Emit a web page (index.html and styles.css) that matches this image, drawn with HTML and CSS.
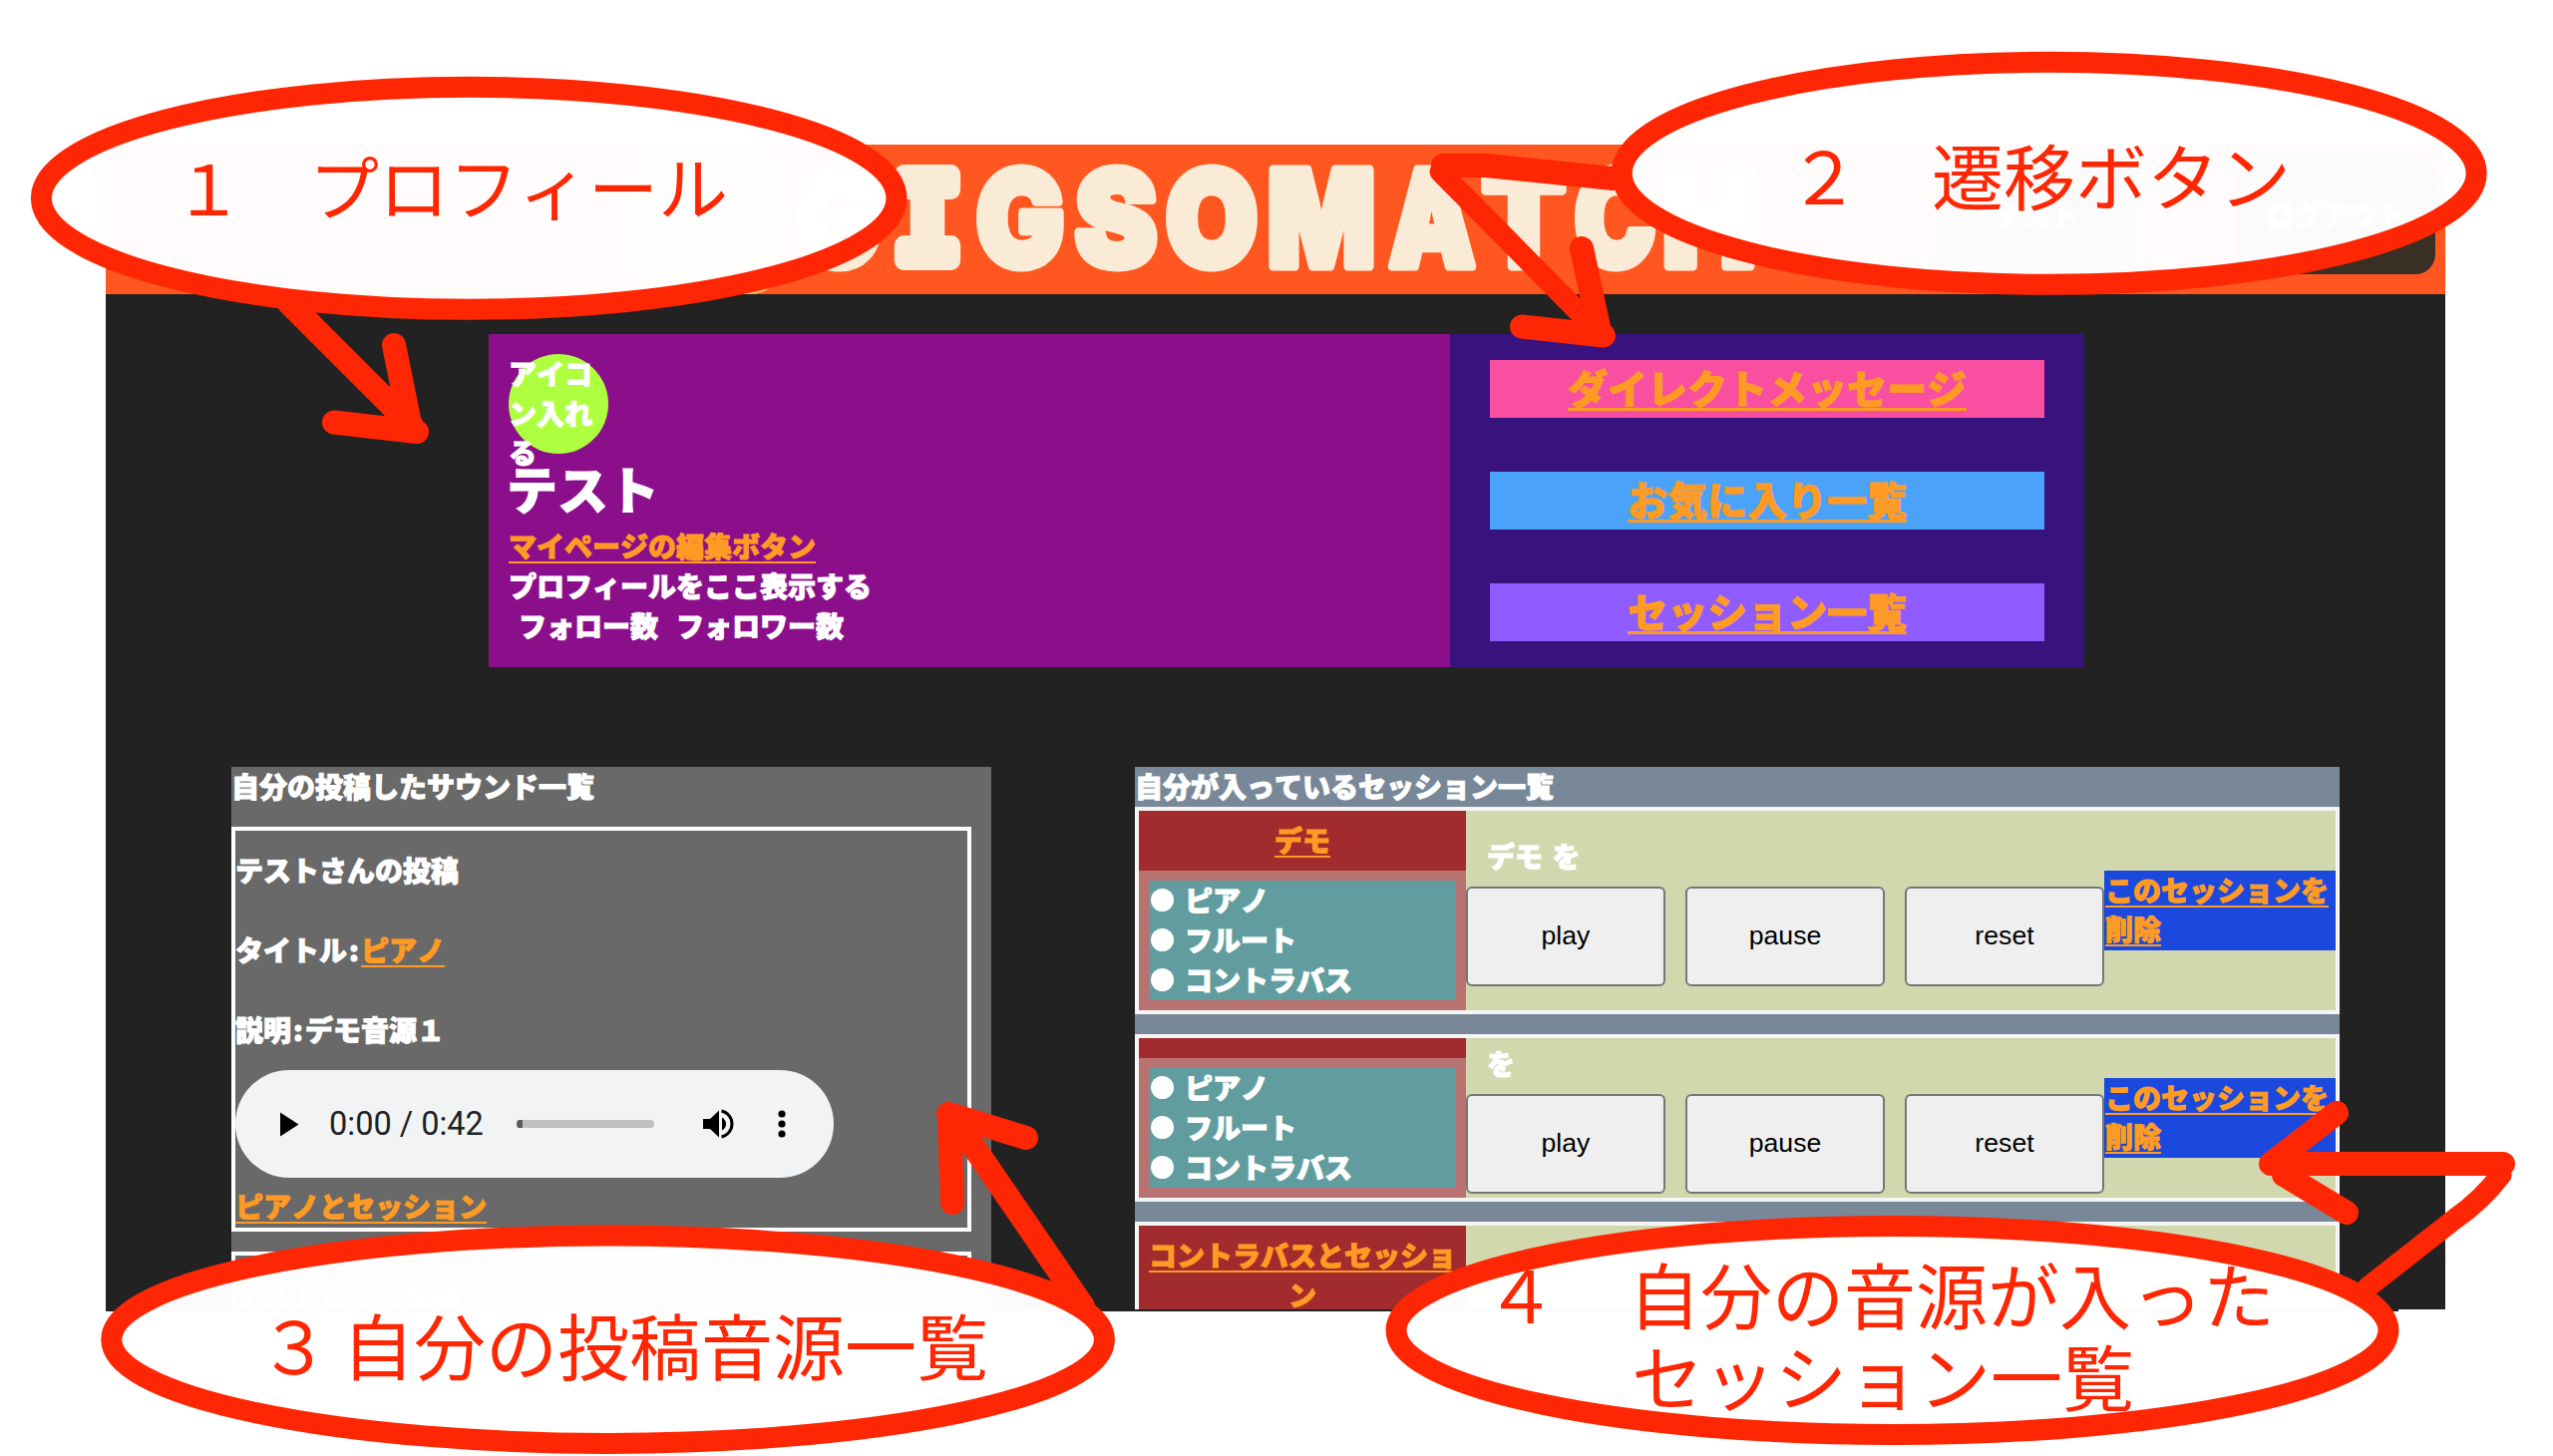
FILE: index.html
```html
<!DOCTYPE html>
<html lang="ja">
<head>
<meta charset="utf-8">
<title>GIGSOMATCH</title>
<link rel="stylesheet" href="styles.css">
</head>
<body>
<div class="site">
  <header class="header">
    <div class="logo">GIG</div>
    <svg class="brand" width="980" height="150" viewBox="0 0 980 150">
      <text y="122" class="brand-text"><tspan x="4" textLength="87" lengthAdjust="spacingAndGlyphs">G</tspan><tspan class="slab" x="104" y="116" textLength="66" lengthAdjust="spacingAndGlyphs">I</tspan><tspan x="186" y="122" textLength="88" lengthAdjust="spacingAndGlyphs">G</tspan><tspan x="285" textLength="82" lengthAdjust="spacingAndGlyphs">S</tspan><tspan x="376" textLength="92" lengthAdjust="spacingAndGlyphs">O</tspan><tspan x="478" textLength="108" lengthAdjust="spacingAndGlyphs">M</tspan><tspan x="600" textLength="86" lengthAdjust="spacingAndGlyphs">A</tspan><tspan x="693" textLength="84" lengthAdjust="spacingAndGlyphs">T</tspan><tspan x="786" textLength="81" lengthAdjust="spacingAndGlyphs">C</tspan><tspan x="874" textLength="94" lengthAdjust="spacingAndGlyphs">H</tspan></text>
    </svg>
    <nav class="nav">
      <span class="nav-item">テスト</span>
      <span class="nav-item">ログアウト</span>
    </nav>
  </header>

  <section class="profile">
    <div class="profile-info">
      <div class="avatar">アイコン入れる</div>
      <h1 class="name">テスト</h1>
      <div><a class="link">マイページの編集ボタン</a></div>
      <div>プロフィールをここ表示する</div>
      <div class="follow"><span>フォロー数</span><span>フォロワー数</span></div>
    </div>
    <div class="profile-links">
      <a class="big-link pink">ダイレクトメッセージ</a>
      <a class="big-link blue">お気に入り一覧</a>
      <a class="big-link violet">セッション一覧</a>
    </div>
  </section>

  <main class="lists">
    <section class="sounds">
      <h2 class="heading">自分の投稿したサウンド一覧</h2>
      <article class="sound">
        <p class="line">テストさんの投稿</p>
        <p class="line">タイトル<span class="colon">:</span><a class="link">ピアノ</a></p>
        <p class="line">説明<span class="colon">:</span>デモ音源１</p>
        <div class="player">
          <svg width="600" height="108" viewBox="0 0 600 108">
            <path d="M45 42.500V66.500L63.500 54.500Z"/>
            <rect x="282" y="50" width="138" height="8" rx="3.500" fill="#bfc0c2"/>
            <path d="M284 50H288V58H284Q282 57 282 54Q282 51 284 50Z" fill="#5a5b5d"/>
            <path d="M469 49H476L485 40.500V67.500L476 59H469Z"/>
            <path d="M488 47.500Q492 50 492 54Q492 58 488 60.500Z"/>
            <path d="M487.500 41A13.300 13.300 0 0 1 487.500 67" fill="none" stroke="#000" stroke-width="3"/>
            <circle cx="548" cy="44" r="3.600"/><circle cx="548" cy="54" r="3.600"/><circle cx="548" cy="64" r="3.600"/>
          </svg>
          <span class="time">0:00 / 0:42</span>
        </div>
        <div class="session-link"><a class="link">ピアノとセッション</a></div>
      </article>
      <article class="sound">
        <p class="line">テストさんの投稿</p>
      </article>
    </section>

    <section class="sessions">
      <h2 class="heading">自分が入っているセッション一覧</h2>
      <article class="session">
        <div class="members">
          <div class="session-name"><a class="link">デモ</a></div>
          <ul class="parts"><li>ピアノ</li><li>フルート</li><li>コントラバス</li></ul>
        </div>
        <div class="controls">
          <p class="target">デモ を</p>
          <div class="buttons"><button>play</button><button>pause</button><button>reset</button></div>
        </div>
        <div class="delete"><a class="link">このセッションを削除</a></div>
      </article>
      <article class="session">
        <div class="members">
          <div class="session-name"></div>
          <ul class="parts"><li>ピアノ</li><li>フルート</li><li>コントラバス</li></ul>
        </div>
        <div class="controls">
          <p class="target">を</p>
          <div class="buttons"><button>play</button><button>pause</button><button>reset</button></div>
        </div>
        <div class="delete"><a class="link">このセッションを削除</a></div>
      </article>
      <article class="session">
        <div class="members">
          <div class="session-name"><a class="link">コントラバスとセッション</a></div>
        </div>
      </article>
    </section>
  </main>
</div>
<div class="site-edge"></div>

<svg class="notes" width="2560" height="1460" viewBox="0 0 2560 1460">
  <g class="bubbles">
    <ellipse cx="470.200" cy="198.800" rx="428.800" ry="111.500"/>
    <ellipse cx="2054.700" cy="173.800" rx="428.500" ry="111.500"/>
    <ellipse cx="609.600" cy="1343.200" rx="497.800" ry="104.200"/>
    <ellipse cx="1897.500" cy="1334" rx="497.500" ry="104.500"/>
  </g>
  <g class="arrows">
    <path d="M290 304L413 427M395 346L412 430M335 423.500L418 433"/>
    <path d="M1618 179L1490 166H1447"/>
    <path d="M1444 172L1600 330" class="thin"/>
    <path d="M1586 249L1603 328M1526 327.500L1608 336.500"/>
    <path d="M951 1117L1029 1141M952 1125L955 1206M960 1126L1086 1310"/>
    <path d="M2510 1167H2277L2343 1116M2290 1178L2353 1216"/>
    <path d="M2508 1178Q2488 1204 2462 1222L2374 1291" class="thin"/>
  </g>
  <g class="labels">
    <text x="174" y="216" font-size="70">１</text>
    <text x="310" y="216" font-size="70">プロフィール</text>
    <text x="1793" y="205" font-size="72">２　遷移ボタン</text>
    <text x="259" y="1378" font-size="72">３</text>
    <text x="343" y="1378" font-size="72">自分の投稿音源一覧</text>
    <text x="1489" y="1327" font-size="72">４　自分の音源が入った</text>
    <text x="1636" y="1409" font-size="72">セッション一覧</text>
  </g>
</svg>
</body>
</html>
```
FILE: styles.css
```css
* { box-sizing: border-box; }

body {
  margin: 0;
  padding: 145px 0 0 106px;
  width: 2560px;
  height: 1460px;
  overflow: hidden;
  position: relative;
  background: #fff;
  color: #fff;
  font: 900 28px/40px "Noto Sans CJK JP", sans-serif;
  font-kerning: none;
}

h1, h2, p, ul { margin: 0; padding: 0; font-weight: 900; }

.site {
  width: 2346px;
  height: 1168px;
  overflow: hidden;
  background: #222;
  -webkit-text-stroke: 1px currentColor;
}

.site-edge { width: 2299px; height: 2px; background: #222; }

.header {
  display: flex;
  height: 150px;
  padding-left: 524px;
  background: #ff571f;
}

.logo {
  width: 158px;
  height: 150px;
  padding-top: 106px;
  border-radius: 36px;
  background: #ffc060;
  color: #b07020;
  font-size: 12px;
  line-height: 20px;
  text-align: center;
}
.brand { margin-left: 5px; }
.brand-text {
  font-family: Inter, sans-serif;
  font-weight: 900;
  font-size: 133px;
  fill: #faebd7;
  stroke: #faebd7;
  stroke-width: 9px;
  stroke-linejoin: round;
}
.slab { font-family: "DejaVu Sans Mono", monospace; font-weight: 700; font-size: 117px; stroke-width: 20px; }

.nav { display: flex; gap: 100px; margin-left: auto; padding: 10px 10px 0 0; }
.nav-item {
  width: 200px;
  height: 120px;
  border-radius: 20px;
  background: #3a2f24;
  text-align: center;
  line-height: 120px;
}

.link { color: #ff9b24; text-decoration: underline; text-decoration-thickness: 2px; text-underline-offset: 4px; text-decoration-skip-ink: none; }

.profile { display: flex; width: 1600px; height: 334px; margin: 40px 0 0 384px; }
.profile-info { width: 964px; padding: 20px; background: #8b0f8b; }
.avatar { width: 100px; height: 100px; border-radius: 50%; background: #adff40; line-height: 39.500px; }
.name { margin: -2px 0 0 -2px; padding-bottom: 1px; font-size: 51px; line-height: 73px; }
.follow { display: flex; gap: 18px; padding-left: 10px; }
.profile-links {
  flex: 1;
  display: flex;
  flex-direction: column;
  gap: 54px;
  padding: 26px 40px;
  background: #38137d;
}
.big-link {
  height: 58px;
  text-align: center;
  font-size: 40px;
  line-height: 55px;
  color: #ff9b24;
  text-decoration: underline;
  text-decoration-thickness: 3px;
  text-underline-offset: 4px;
  text-decoration-skip-ink: none;
}
.pink { background: #f94fa1; }
.blue { background: #4ba3f9; }
.violet { background: #905cff; }

.lists { display: flex; gap: 144px; margin: 100px 0 0 126px; }
.heading { font-size: 28px; height: 40px; line-height: 38px; white-space: nowrap; }

.sounds { width: 762px; height: 700px; background: #696969; }
.sound {
  width: 742px;
  height: 406px;
  margin-top: 20px;
  border: 4px solid #fff;
}
.line { height: 80px; padding: 19px 0 21px; }
.colon { display: inline-block; width: 14px; text-align: center; }
.player {
  position: relative;
  width: 600px;
  height: 108px;
  border-radius: 54px;
  background: #f1f3f5;
}
.time {
  position: absolute;
  left: 94px;
  top: 34px;
  color: #202124;
  font: 400 32.500px/40px Roboto, sans-serif;
  -webkit-text-stroke: 0;
}
.session-link { margin-top: 8px; }

.sessions { width: 1208px; height: 700px; background: #788898; }
.session {
  display: flex;
  align-items: center;
  margin-bottom: 20px;
  border: 4px solid #f5f5f5;
  background: #d2d8ae;
}
.members { width: 328px; align-self: stretch; background: #b87270; }
.session-name { padding: 9px 10px 11px; text-align: center; background: #a22b2d; }
.parts { margin: 10px; background: #619d9e; list-style: none; }
.parts li { display: flex; gap: 11px; height: 40px; padding-left: 2px; line-height: 38px; }
.parts li::before { content: ""; width: 23px; height: 23px; margin-top: 8px; border-radius: 50%; background: #fff; }

.controls { width: 640px; }
.target { height: 42px; margin-bottom: 10px; padding-left: 21px; line-height: 42px; word-spacing: 3px; }
.buttons { display: flex; gap: 20px; }
.buttons button {
  width: 200px;
  height: 100px;
  padding: 0 0 2px;
  border: 2px solid #767676;
  border-radius: 6px;
  background: #efefef;
  color: #000;
  font: 26.670px "Liberation Sans", sans-serif;
  -webkit-text-stroke: 0;
}
.delete { flex: 1; height: 80px; padding-left: 1px; background: #1c49dd; line-height: 39px; }

.notes { position: absolute; left: 0; top: 0; }
.bubbles { fill: rgba(255, 255, 255, .985); stroke: #ff2603; stroke-width: 21px; }
.arrows { fill: none; stroke: #ff2603; stroke-width: 24px; stroke-linecap: round; stroke-linejoin: round; }
.arrows .thin { stroke-width: 21px; }
.labels { fill: #ff2603; font-family: "Noto Sans CJK JP", sans-serif; font-weight: 400; }
```
